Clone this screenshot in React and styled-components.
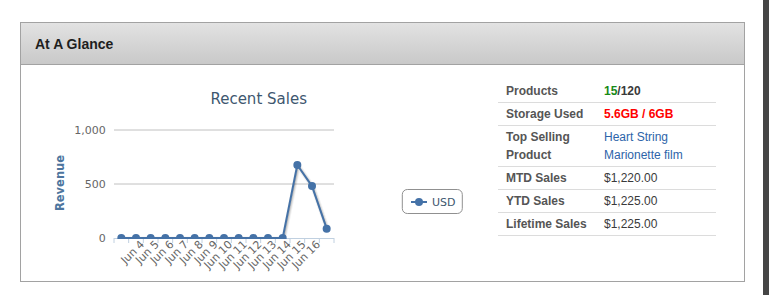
import React from "react";
import styled, { createGlobalStyle } from "styled-components";

const GlobalStyle = createGlobalStyle`
html, body {
    margin: 0;
    padding: 0;
    background: #fff;
}
body {
    font-family: "Liberation Sans", Arial, sans-serif;
}
`

const Page = styled.div`
display: flex;
height: 100vh;
`

const Main = styled.main`
flex: 1;
padding: 22px 0 0 20px;
`

const ScrollEdge = styled.div`
width: 6px;
background: #454545;
`

const Panel = styled.section`
width: 725px;
box-sizing: border-box;
border: 1px solid #a2a2a2;
`

const PanelHeader = styled.header`
height: 41px;
display: flex;
align-items: center;
padding-left: 14px;
border-bottom: 1px solid #a2a2a2;
background: linear-gradient(to bottom, #e2e2e2, #c9c9c9);
h2 {
    margin: 0;
    font-size: 14px;
    font-weight: bold;
    color: #1e1e1e;
}
`

const PanelBody = styled.div`
height: 216px;
display: flex;
align-items: flex-start;
background: #fff;
`

const ChartSvg = styled.svg`
display: block;
flex: none;
font-family: "DejaVu Sans", Verdana, sans-serif;
`

const Stats = styled.table`
margin: 15px 0 0 7px;
width: 218px;
border-collapse: collapse;
font-size: 12px;
line-height: 18px;
tr {
    border-bottom: 1px solid #dcdcdc;
}
td {
    padding: 2px 0;
    vertical-align: top;
}
`

const Label = styled.td`
width: 98px;
padding-left: 8px !important;
font-weight: bold;
color: #555;
`

const Value = styled.td`
color: ${(p) => p.color || "#3a3a3a"};
font-weight: ${(p) => (p.bold ? "bold" : "normal")};
`

const Good = styled.span`
color: #178a17;
`

const ProductLink = styled.a`
color: #2d64a9;
text-decoration: none;
`

// ------------ dados do grafico ------------
const valores = [0, 0, 0, 0, 0, 0, 0, 0, 0, 0, 0, 0, 676, 481, 86]
const plotX = 93
const plotW = 220
const zeroY = 173
const passo = plotW / valores.length
const cx = (i) => plotX + passo / 2 + i * passo
const cy = (v) => zeroY - v * 0.108

function RecentSales() {
    const pontos = valores.map((v, i) => `${cx(i).toFixed(1)},${cy(v).toFixed(1)}`).join(" ")
    const linha = "M" + pontos.split(" ").join(" L")
    const rotulos = []
    for (let i = 1; i <= 13; i++) {
        rotulos.push({ i, texto: `Jun ${i + 3}` })
    }
    return (
        <ChartSvg width="470" height="215" viewBox="0 0 470 215">
            <defs>
                <clipPath id="plot">
                    <rect x={plotX - 8} y="0" width={plotW + 16} height={zeroY + 1} />
                </clipPath>
            </defs>
            <text x="237.7" y="39" textAnchor="middle" fontSize="15" fill="#3e576f">Recent Sales</text>

            {[65, 119].map((y) => (
                <line key={y} x1={plotX} x2={plotX + plotW} y1={y} y2={y} stroke="#c0c0c0" strokeWidth="1" />
            ))}
            <line x1={plotX} x2={plotX + plotW} y1={zeroY + 0.5} y2={zeroY + 0.5} stroke="#c0d0e0" strokeWidth="1" />
            {Array.from({ length: valores.length + 1 }).map((_, i) => (
                <line key={i} x1={plotX + i * passo} x2={plotX + i * passo} y1={zeroY} y2={zeroY + 5} stroke="#c0d0e0" strokeWidth="1" />
            ))}

            <g fontSize="11" fill="#666" textAnchor="end">
                <text x="84.7" y="69">1,000</text>
                <text x="84.7" y="123">500</text>
                <text x="84.7" y="177">0</text>
            </g>
            <text x="39" y="118" transform="rotate(-90 39 118)" textAnchor="middle" dominantBaseline="central" fontSize="11.5" fontWeight="bold" fill="#4d759e">Revenue</text>

            <g fontSize="11" fill="#666" textAnchor="end">
                {rotulos.map((r) => {
                    const x = cx(r.i) + 9
                    return (
                        <text key={r.i} x={x} y="180" transform={`rotate(-45 ${x} 180)`}>{r.texto}</text>
                    )
                })}
            </g>

            <g clipPath="url(#plot)">
                <g transform="translate(1 1)" fill="none" strokeLinejoin="round">
                    <path d={linha} stroke="rgba(0,0,0,0.05)" strokeWidth="5" />
                    <path d={linha} stroke="rgba(0,0,0,0.1)" strokeWidth="3" />
                    <path d={linha} stroke="rgba(0,0,0,0.15)" strokeWidth="1" />
                </g>
                <path d={linha} fill="none" stroke="#4572a7" strokeWidth="2" strokeLinejoin="round" />
                {valores.map((v, i) => (
                    <circle key={i} cx={cx(i)} cy={cy(v)} r="4" fill="#4572a7" />
                ))}
            </g>

            <rect x="381.3" y="124.5" width="60" height="24" rx="5" fill="#fff" stroke="#909090" strokeWidth="1" />
            <line x1="390" x2="406" y1="137" y2="137" stroke="#4572a7" strokeWidth="2" />
            <circle cx="398" cy="137" r="4" fill="#4572a7" />
            <text x="411" y="141" fontSize="11" fill="#3e576f">USD</text>
        </ChartSvg>
    )
}

export default function App() {
    return (
        <Page>
            <GlobalStyle />
            <Main>
                <Panel>
                    <PanelHeader>
                        <h2>At A Glance</h2>
                    </PanelHeader>
                    <PanelBody>
                        <RecentSales />
                        <Stats>
                            <tbody>
                                <tr>
                                    <Label>Products</Label>
                                    <Value bold><Good>15</Good>/120</Value>
                                </tr>
                                <tr>
                                    <Label>Storage Used</Label>
                                    <Value bold color="#f00">5.6GB / 6GB</Value>
                                </tr>
                                <tr>
                                    <Label>Top Selling Product</Label>
                                    <Value><ProductLink href="#">Heart String Marionette film</ProductLink></Value>
                                </tr>
                                <tr>
                                    <Label>MTD Sales</Label>
                                    <Value>$1,220.00</Value>
                                </tr>
                                <tr>
                                    <Label>YTD Sales</Label>
                                    <Value>$1,225.00</Value>
                                </tr>
                                <tr>
                                    <Label>Lifetime Sales</Label>
                                    <Value>$1,225.00</Value>
                                </tr>
                            </tbody>
                        </Stats>
                    </PanelBody>
                </Panel>
            </Main>
            <ScrollEdge />
        </Page>
    )
}
